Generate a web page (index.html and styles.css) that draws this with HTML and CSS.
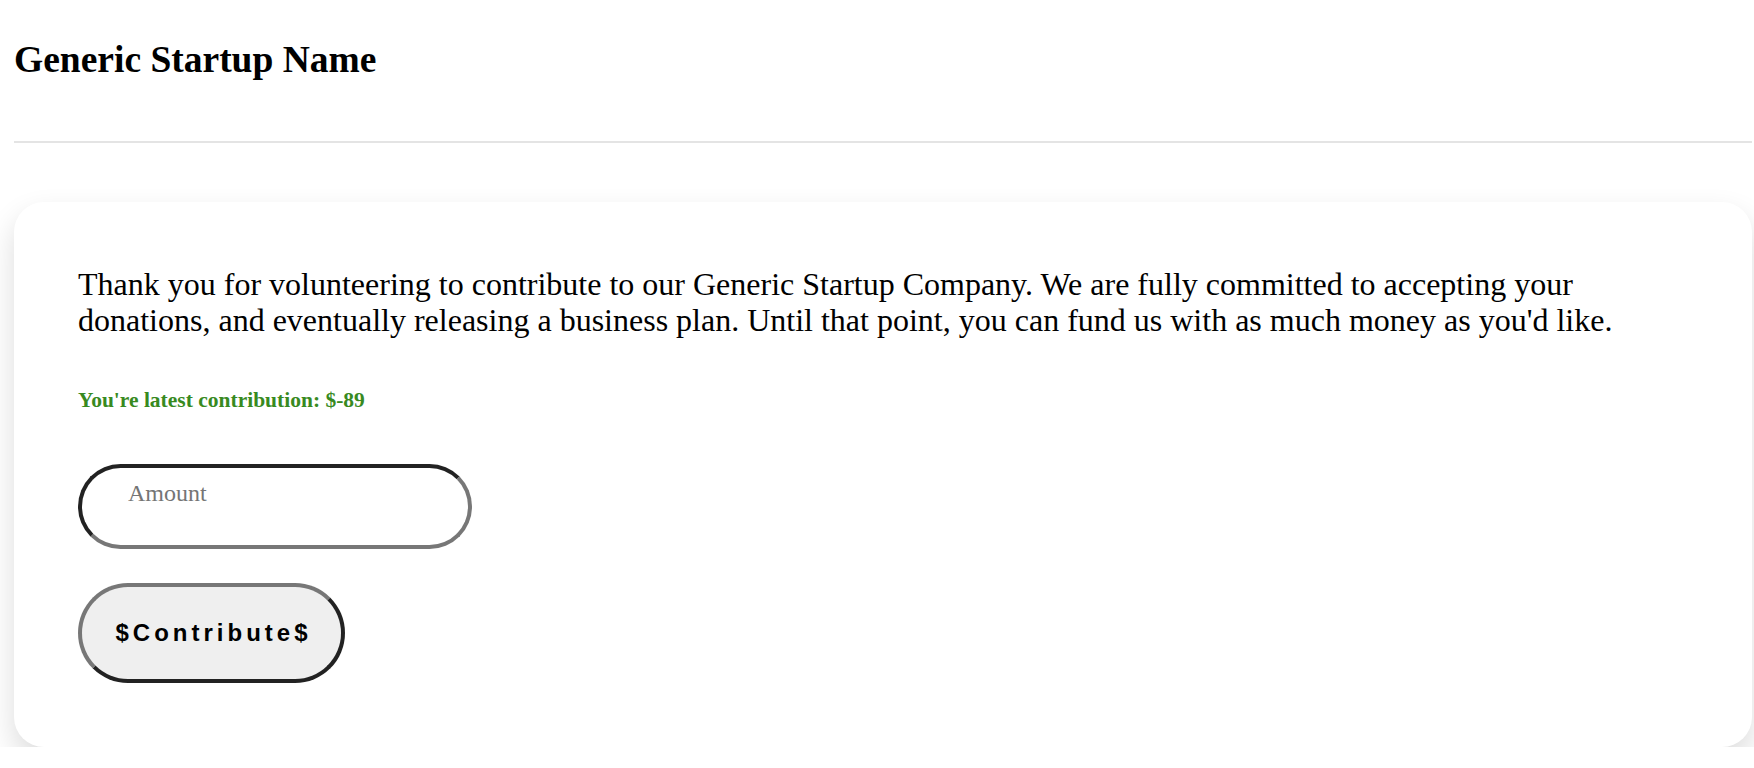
FILE: index.html
```html
<!DOCTYPE html>
<html lang="en">
<head>
<meta charset="utf-8">
<title>Generic Startup Name</title>
<link rel="stylesheet" href="styles.css">
</head>
<body>
<header class="site-header">
  <h1 class="brand">Generic Startup Name</h1>
</header>
<hr class="divider">
<main class="card">
  <p class="intro">Thank you for volunteering to contribute to our Generic Startup Company. We are fully committed to accepting your donations, and eventually releasing a business plan. Until that point, you can fund us with as much money as you'd like.</p>
  <p class="latest">You're latest contribution: $-89</p>
  <form class="contribute-form">
    <input class="amount" type="text" placeholder="Amount">
    <button class="contribute" type="button">$Contribute$</button>
  </form>
</main>
</body>
</html>
```

FILE: styles.css
```css
html, body {
  margin: 0;
  padding: 0;
  background: #ffffff;
}

body {
  padding: 0 2px 0 14px;
  font-family: "Liberation Serif", "Times New Roman", serif;
  color: #000;
}

.site-header {
  padding-top: 40px;
}

.brand {
  margin: 0;
  font-size: 37.5px;
  line-height: 40px;
  font-weight: bold;
}

.divider {
  margin: 61px 0 0 0;
  border: 0;
  height: 2px;
  background: #e4e4e4;
}

.card {
  margin-top: 59px;
  background: #fff;
  border-radius: 30px;
  box-shadow: 0 14px 30px rgba(0, 0, 0, 0.14);
  padding: 64px 64px 64px 64px;
}

.intro {
  margin: 0;
  font-size: 32px;
  line-height: 36px;
}

.latest {
  margin: 50px 0 0 0;
  font-size: 21.5px;
  line-height: 25px;
  font-weight: bold;
  color: #388a1f;
}

.contribute-form {
  margin-top: 51px;
  display: flex;
  flex-direction: column;
  align-items: flex-start;
  gap: 34px;
}

.amount {
  box-sizing: border-box;
  width: 394px;
  height: 85px;
  margin: 0;
  padding: 11px 12px 38px 46px;
  border: 4px solid;
  border-color: #222 #777 #777 #222;
  border-radius: 43px;
  font-family: "Liberation Serif", "Times New Roman", serif;
  font-size: 24px;
  line-height: 28px;
  background: #fff;
  outline: none;
}

.amount::placeholder {
  color: #757575;
}

.contribute {
  box-sizing: border-box;
  width: 267px;
  height: 100px;
  margin: 0;
  padding: 0 0 0 4px;
  border: 4px solid;
  border-color: #777 #222 #222 #777;
  border-radius: 50px;
  background: #efefef;
  font-family: "Liberation Sans", Arial, sans-serif;
  font-weight: bold;
  font-size: 24px;
  letter-spacing: 4px;
  color: #000;
}
```
